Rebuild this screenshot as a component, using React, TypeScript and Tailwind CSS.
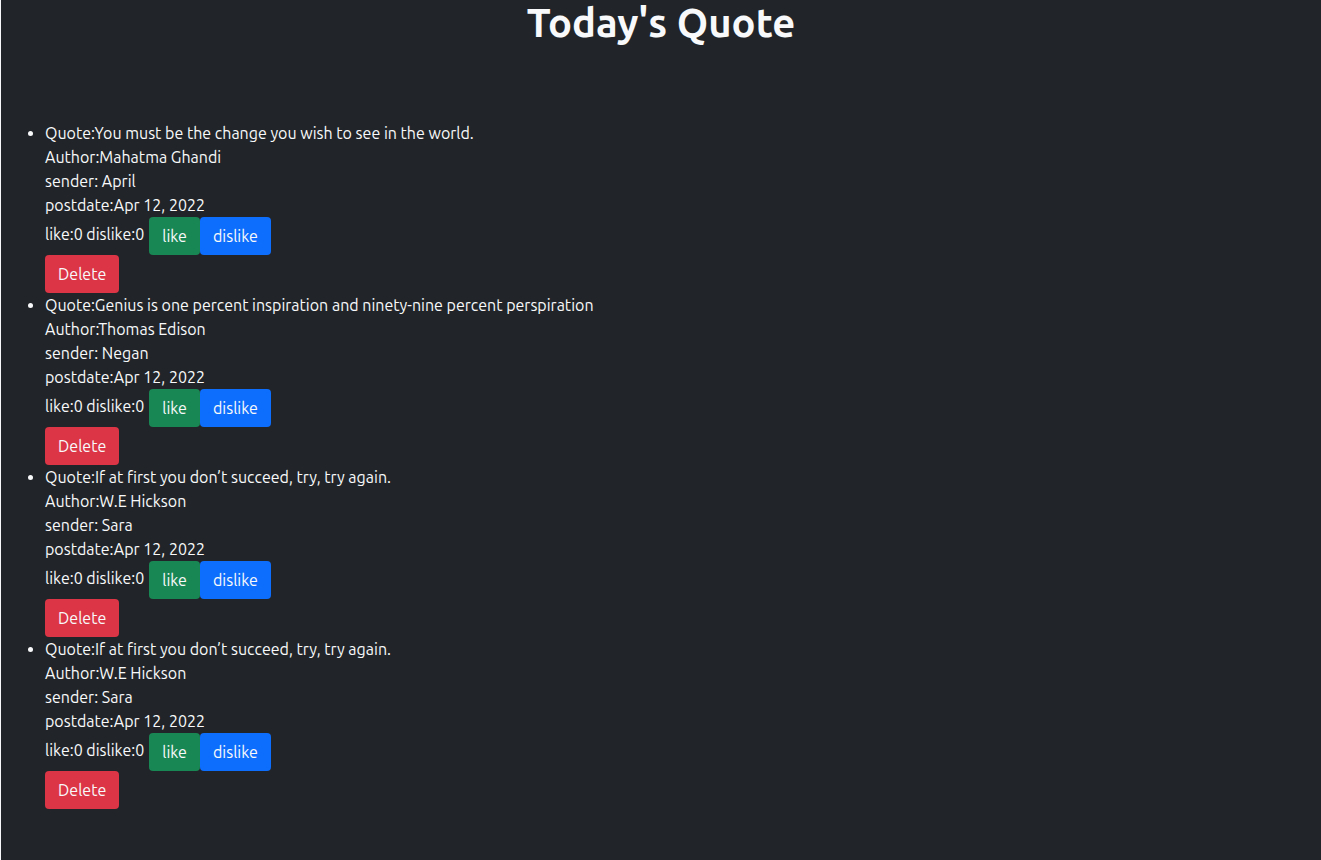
type Quote = {
  id: number;
  text: string;
  author: string;
  sender: string;
  postDate: string;
};

const quotes: Quote[] = [
  { id: 1, text: 'You must be the change you wish to see in the world.', author: 'Mahatma Ghandi', sender: 'April', postDate: 'Apr 12, 2022' },
  { id: 2, text: 'Genius is one percent inspiration and ninety-nine percent perspiration', author: 'Thomas Edison', sender: 'Negan', postDate: 'Apr 12, 2022' },
  { id: 3, text: 'If at first you don’t succeed, try, try again.', author: 'W.E Hickson', sender: 'Sara', postDate: 'Apr 12, 2022' },
  { id: 4, text: 'If at first you don’t succeed, try, try again.', author: 'W.E Hickson', sender: 'Sara', postDate: 'Apr 12, 2022' },
];

function QuoteItem({ quote }: { quote: Quote }) {
  return (
    <li>
      <p>Quote:{quote.text}</p>
      <p>Author:{quote.author}</p>
      <p>sender: {quote.sender}</p>
      <p>postdate:{quote.postDate}</p>
      <div className="flex">
        <span className="mr-[5px] pt-[5px]">like:0 dislike:0</span>
        <button type="button" className="rounded-sm bg-[#198754] px-[13px] py-[7px]">like</button>
        <button type="button" className="rounded-sm bg-[#0d6efd] px-[13px] py-[7px]">dislike</button>
      </div>
      <button type="button" className="block rounded-sm bg-[#dc3545] px-[13px] py-[7px]">Delete</button>
    </li>
  );
}

export default function App() {
  return (
    <main className="min-h-screen border-l border-[#f8f9fa] bg-[#212529] pb-12 font-['Ubuntu','Noto_Sans',sans-serif] text-base text-[#f8f9fa]">
      <h1 className="mb-[75px] text-center font-['Ubuntu_Medium','Ubuntu','Noto_Sans',sans-serif] text-[40px] leading-[46px] font-semibold">Today's Quote</h1>
      <ul className="list-disc pl-11">
        {quotes.map((quote) => (
          <QuoteItem key={quote.id} quote={quote} />
        ))}
      </ul>
    </main>
  );
}
